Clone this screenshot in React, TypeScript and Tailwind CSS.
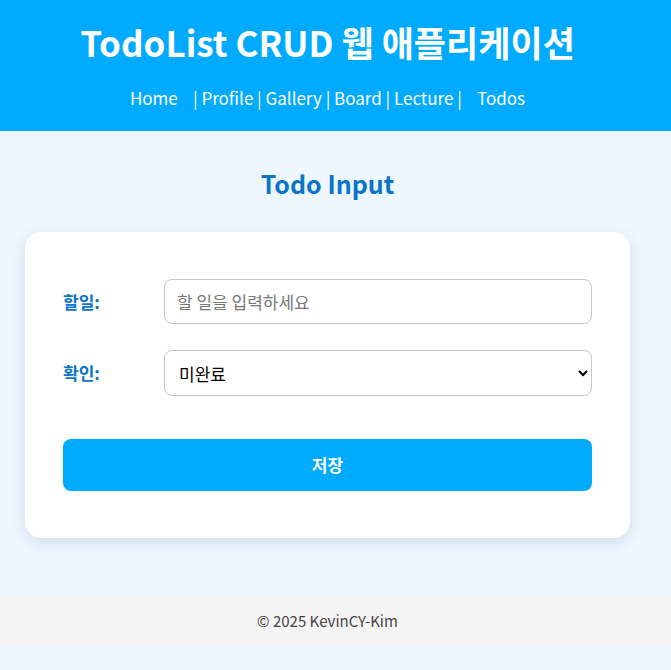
import React from "react";

export default function App() {
  return (
    <div
      className="min-h-[670px] bg-[#eef6fe] flex flex-col"
      style={{ fontFamily: '"Noto Sans CJK KR", sans-serif' }}
    >
      <header className="bg-[#00aaff] h-[131px] flex flex-col items-center pr-[16px]">
        <h1 className="text-white text-[35px] font-bold leading-none mt-[24px]">
          TodoList CRUD 웹 애플리케이션
        </h1>
        <nav className="text-white text-[17px] mt-[30px] leading-none whitespace-pre">
          Home    | Profile | Gallery | Board | Lecture |    Todos
        </nav>
      </header>
      <main className="flex flex-col items-start pl-[25px]">
        <h2 className="w-[605px] text-center text-[#0a74c9] text-[25px] font-bold mt-[40px] leading-none">
          Todo Input
        </h2>
        <div className="w-[605px] bg-white rounded-[16px] shadow-[0_4px_14px_rgba(0,40,90,0.12)] mt-[36px] px-[38px] pt-[47px] pb-[47px]">
          <div className="flex items-center">
            <label className="w-[101px] text-[#0a74c9] font-bold text-[17px]">할일:</label>
            <input
              className="flex-1 h-[45px] border border-[#c8c8c8] rounded-[8px] px-[12px] text-[17px] outline-none placeholder:text-[#777]"
              placeholder="할 일을 입력하세요"
            />
          </div>
          <div className="flex items-center mt-[26px]">
            <label className="w-[101px] text-[#0a74c9] font-bold text-[17px]">확인:</label>
            <select className="flex-1 h-[46px] border border-[#c8c8c8] rounded-[8px] px-[10px] text-[17px] bg-white text-black outline-none">
              <option>미완료</option>
              <option>완료</option>
            </select>
          </div>
          <button className="w-full h-[52px] mt-[43px] bg-[#00aaff] text-white font-bold text-[17px] rounded-[8px]">
            저장
          </button>
        </div>
      </main>
      <footer className="mt-[58px] h-[50px] bg-[#f4f4f4] flex items-center justify-center pr-[16px] text-[15px] text-[#444]">
        © 2025 KevinCY-Kim
      </footer>
    </div>
  );
}
